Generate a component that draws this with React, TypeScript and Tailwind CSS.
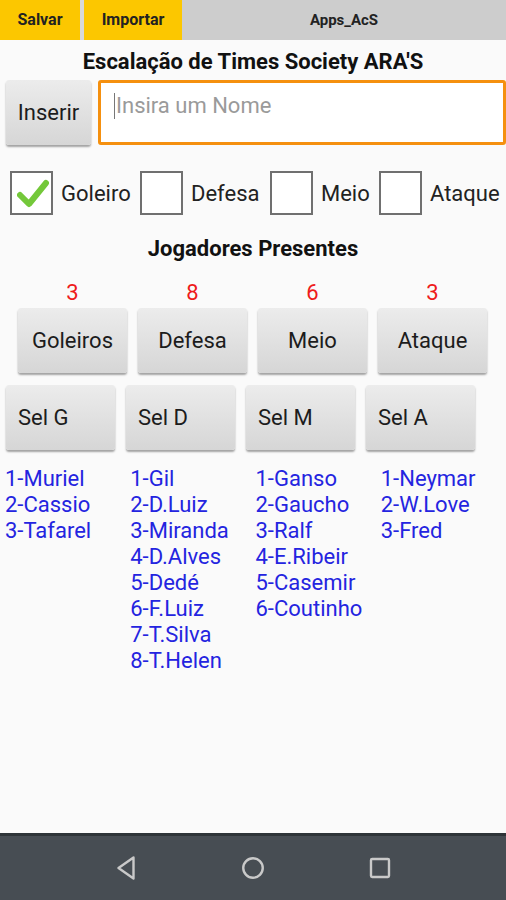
const COUNTS = ["3", "8", "6", "3"];
const GROUPS = ["Goleiros", "Defesa", "Meio", "Ataque"];
const SEL = ["Sel G", "Sel D", "Sel M", "Sel A"];
const LISTS = [
  ["1-Muriel", "2-Cassio", "3-Tafarel"],
  ["1-Gil", "2-D.Luiz", "3-Miranda", "4-D.Alves", "5-Dedé", "6-F.Luiz", "7-T.Silva", "8-T.Helen"],
  ["1-Ganso", "2-Gaucho", "3-Ralf", "4-E.Ribeir", "5-Casemir", "6-Coutinho"],
  ["1-Neymar", "2-W.Love", "3-Fred"],
];

function GrayButton({ children, className = "" }: { children: React.ReactNode; className?: string }) {
  return (
    <div
      className={
        "flex h-[65px] items-center rounded-[3px] bg-gradient-to-b from-[#ececec] to-[#d6d6d6] text-[22px] text-[#1c1c1c] shadow-[0_2px_2px_rgba(0,0,0,0.35)] " +
        className
      }
    >
      {children}
    </div>
  );
}

function Box({ checked }: { checked?: boolean }) {
  return (
    <div className="relative h-[44px] w-[43px] border-2 border-[#707070] bg-white">
      {checked && (
        <svg className="absolute left-[5px] top-[5px]" width="32" height="30" viewBox="0 0 32 30">
          <path
            d="M3 17 L12 26 L29 5"
            fill="none"
            stroke="#74c83a"
            strokeWidth="6"
            strokeLinecap="round"
            strokeLinejoin="round"
          />
        </svg>
      )}
    </div>
  );
}

export default function App() {
  return (
    <div className="flex h-[900px] w-[506px] flex-col bg-[#fafafa] font-['Roboto',sans-serif]">
      {/* action bar */}
      <div className="flex h-[40px] bg-[#cdcdcd] text-[16px] font-bold text-[#222]">
        <div className="flex w-[80px] items-center justify-center bg-[#fcc700]">Salvar</div>
        <div className="w-[4px] bg-[#d9d9d9]" />
        <div className="flex w-[98px] items-center justify-center bg-[#fcc700]">Importar</div>
        <div className="flex flex-1 items-center justify-center text-[15px]">Apps_AcS</div>
      </div>

      <h1 className="mt-[8px] text-center text-[22px] font-bold leading-[28px] text-[#111]">
        Escalação de Times Society ARA'S
      </h1>

      <div className="mt-[4px] flex items-start gap-[7px] pl-[6px]">
        <GrayButton className="w-[85px] justify-center">Inserir</GrayButton>
        <div className="h-[65px] flex-1 rounded-[3px] border-[3px] border-[#f5900f] bg-white pl-[13px] pt-[6px]">
          <div className="flex items-center">
            <span className="mr-[1px] h-[26px] w-[1px] bg-[#777]" />
            <span className="text-[22px] text-[#9a9a9a]">Insira um Nome</span>
          </div>
        </div>
      </div>

      {/* checkbox row */}
      <div className="mt-[26px] flex items-center pl-[10px] text-[22px] text-[#222]">
        <Box checked />
        <span className="ml-[8px] w-[79px]">Goleiro</span>
        <Box />
        <span className="ml-[8px] w-[79px]">Defesa</span>
        <Box />
        <span className="ml-[8px] w-[58px]">Meio</span>
        <Box />
        <span className="ml-[8px]">Ataque</span>
      </div>

      <h2 className="mt-[21px] text-center text-[22px] font-bold leading-[26px] text-[#111]">Jogadores Presentes</h2>

      <div className="mt-[19px] flex gap-[11px] pl-[18px]">
        {COUNTS.map((c, i) => (
          <div key={i} className="w-[109px] text-center text-[22px] leading-[24px] text-[#ee1b1b]">
            {c}
          </div>
        ))}
      </div>

      <div className="mt-[3px] flex gap-[11px] pl-[18px]">
        {GROUPS.map((g) => (
          <GrayButton key={g} className="w-[109px] justify-center">
            {g}
          </GrayButton>
        ))}
      </div>

      <div className="mt-[12px] flex gap-[11px] pl-[6px]">
        {SEL.map((s) => (
          <GrayButton key={s} className="w-[109px] pl-[12px]">
            {s}
          </GrayButton>
        ))}
      </div>

      {/* lists */}
      <div className="mt-[16px] flex pl-[5px] text-[22px] leading-[26px] text-[#2424e0]">
        {LISTS.map((l, i) => (
          <div key={i} className="w-[127px]">
            {l.map((n) => (
              <div key={n}>{n}</div>
            ))}
          </div>
        ))}
      </div>

      <div className="flex-1" />

      {/* nav bar */}
      <div className="flex h-[67px] items-center justify-center gap-[91px] border-t-[3px] border-[#2e3438] bg-[#474d53] pb-[1px]">
        <svg width="36" height="36" viewBox="0 0 24 24" fill="none" stroke="#c9c9c9" strokeWidth="1.6" strokeLinejoin="round">
          <path d="M17 5 L7 12 L17 19 Z" />
        </svg>
        <svg width="36" height="36" viewBox="0 0 24 24" fill="none" stroke="#c9c9c9" strokeWidth="1.6">
          <circle cx="12" cy="12" r="6.5" />
        </svg>
        <svg width="36" height="36" viewBox="0 0 24 24" fill="none" stroke="#c9c9c9" strokeWidth="1.6">
          <rect x="6" y="6" width="12" height="12" rx="0.8" />
        </svg>
      </div>
    </div>
  );
}
